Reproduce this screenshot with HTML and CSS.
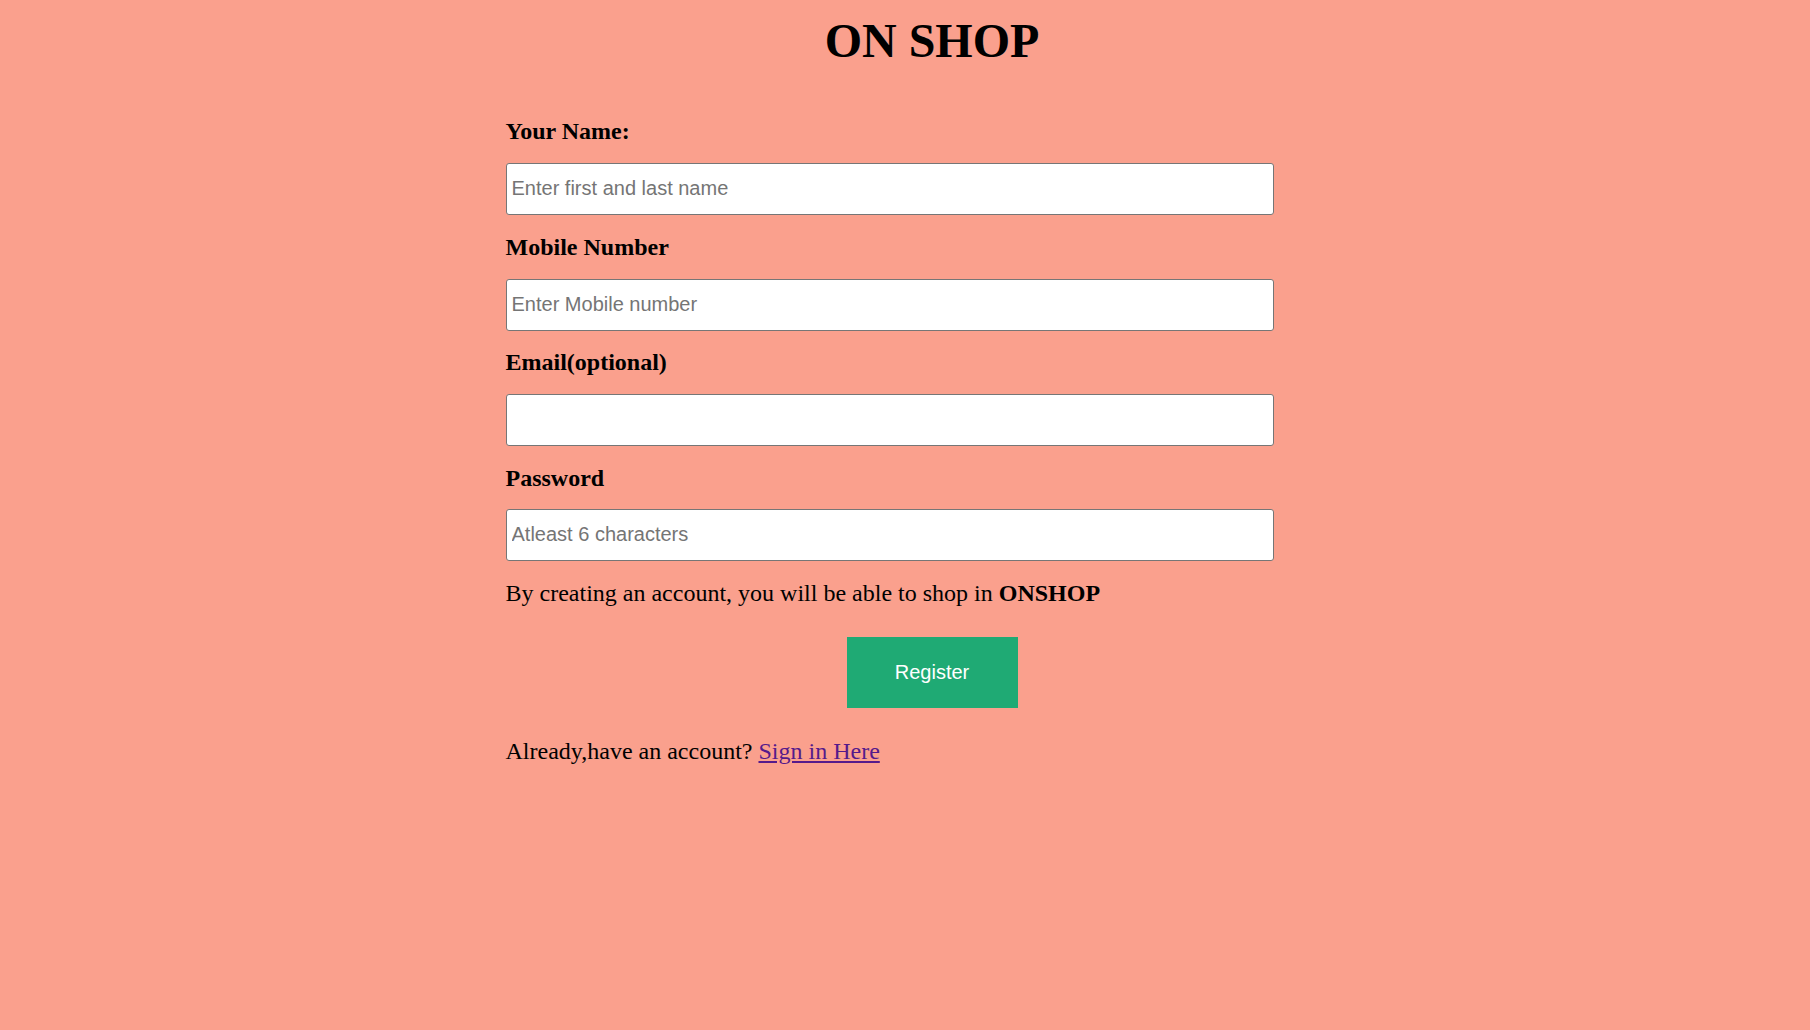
FILE: index.html
```html
<!DOCTYPE html>
<html lang="en">
<head>
<meta charset="utf-8">
<title>ON SHOP</title>
<link rel="stylesheet" href="styles.css">
</head>
<body>
<div class="page">
  <h1 class="title">ON SHOP</h1>
  <form class="form">
    <div class="fields">
      <label class="label" for="name">Your Name:</label>
      <input class="input" id="name" type="text" placeholder="Enter first and last name">
      <label class="label" for="mobile">Mobile Number</label>
      <input class="input" id="mobile" type="text" placeholder="Enter Mobile number">
      <label class="label" for="email">Email(optional)</label>
      <input class="input" id="email" type="email">
      <label class="label" for="password">Password</label>
      <input class="input" id="password" type="password" placeholder="Atleast 6 characters">
      <p class="note">By creating an account, you will be able to shop in <b>ONSHOP</b></p>
    </div>
    <div class="actions">
      <button class="btn" type="button">Register</button>
    </div>
    <p class="signin">Already,have an account? <a class="link" href="#">Sign in Here</a></p>
  </form>
</div>
</body>
</html>
```

FILE: styles.css
```css
html, body {
  margin: 0;
  padding: 0;
}
body {
  background: rgb(250, 160, 141);
  color: #000;
  font-family: "Liberation Serif", "Times New Roman", serif;
  min-height: 1030px;
}
.page {
  padding: 0 8px 0 62px;
}
.title {
  margin: 12.8px 0 0;
  font-size: 48px;
  line-height: 56px;
  font-weight: bold;
  text-align: center;
}
.form {
  margin: 0;
}
.fields {
  width: 768px;
  margin-left: 443.5px;
  padding-top: 49.6px;
  display: flex;
  flex-direction: column;
}
.label {
  display: block;
  font-size: 24px;
  line-height: 26px;
  font-weight: bold;
  margin-bottom: 18.9px;
}
.input {
  box-sizing: border-box;
  width: 768px;
  height: 52px;
  margin: 0 0 18.5px;
  padding: 0 5px 1px;
  border: 1px solid #767676;
  border-radius: 3px;
  background: #fff;
  font-family: "Liberation Sans", Arial, sans-serif;
  font-size: 20px;
  color: #000;
  outline: none;
}
.input::placeholder {
  color: #757575;
}
.note {
  margin: 0;
  font-size: 24px;
  line-height: 26px;
}
.actions {
  display: flex;
  justify-content: center;
  margin-top: 31.4px;
}
.btn {
  width: 171px;
  height: 71px;
  border: none;
  background: rgb(31, 170, 116);
  color: #fff;
  font-family: "Liberation Sans", Arial, sans-serif;
  font-size: 20px;
  cursor: pointer;
}
.signin {
  margin: 28.2px 0 0 443.5px;
  font-size: 24px;
  line-height: 28px;
}
.link {
  color: #551a8b;
}
```
